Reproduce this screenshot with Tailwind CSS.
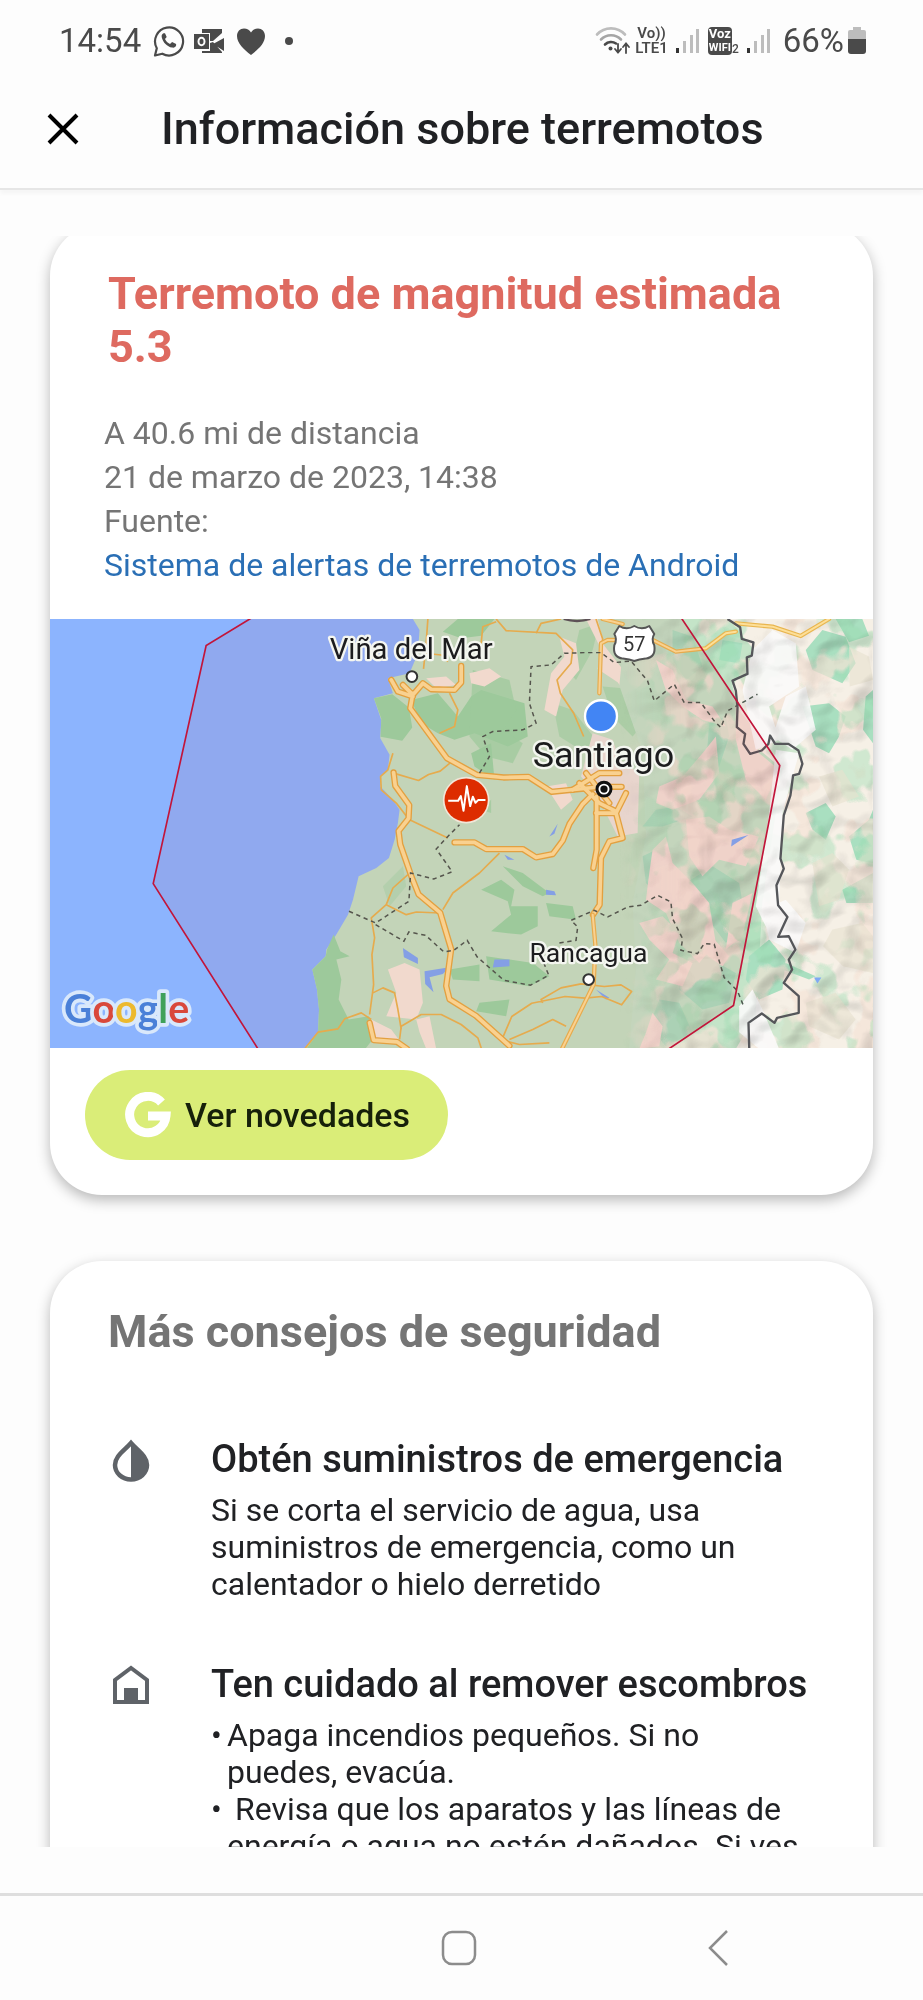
<!DOCTYPE html>
<html lang="es">
<head>
    <meta charset="UTF-8">
    <meta name="viewport" content="width=device-width, initial-scale=1.0">
    <title>Información sobre terremotos</title>
    <script src="https://cdn.jsdelivr.net/npm/@tailwindcss/browser@4"></script>
</head>
<body class="bg-[#fdfdfd] font-['Roboto',sans-serif] text-[#202124]">
    <div class="flex h-screen flex-col">

        <!-- Status bar -->
        <div class="flex h-[82px] shrink-0 items-center justify-between pl-[59px] pr-[57px] text-[#4a4a4a]">
            <div class="flex items-center gap-2">
                <span class="mr-1 text-[33px] leading-10">14:54</span>
                <svg class="size-8" viewBox="0 0 32 32" fill="none" stroke="currentColor" stroke-width="2.2">
                    <path d="M2 30.500l1.800-7.300A14 14 0 1 1 9.300 28.700z" stroke-linejoin="round"/>
                    <path d="M10.500 8.200c-1.600.8-2.200 2.300-1.700 4.200 1.200 5 5.300 9.100 10.300 10.200 1.900.4 3.400-.3 4-2v-1.500l-4-2.200-2.100 2c-2.300-.9-4-2.600-5-4.900l1.700-2-1.700-3.800z" fill="currentColor" stroke="none"/>
                </svg>
                <svg class="h-8 w-8" viewBox="0 0 32 32" fill="currentColor">
                    <path d="M9 4h20v4l-9 8h-3V8H9zM17 18l3-1 9 10v1H9v-2h8zM31 13v13l-11-7z"/>
                    <path d="M1 9h15v15H1z"/>
                    <ellipse cx="8.500" cy="16.500" rx="3" ry="3.800" fill="none" stroke="#fdfdfd" stroke-width="2"/>
                </svg>
                <svg class="ml-1 h-8 w-7" viewBox="0 0 28 32" fill="currentColor">
                    <path d="M14 30C7 24.500 0 18.500 0 11 0 6.500 3 3.500 7 3.500c3 0 5.500 1.500 7 4 1.500-2.500 4-4 7-4 4 0 7 3 7 7.500 0 7.500-7 13.500-14 19z"/>
                </svg>
                <span class="ml-3 size-2 rounded-full bg-current"></span>
            </div>
            <div class="flex items-center">
                <svg class="h-8 w-9" viewBox="0 0 36 32" fill="none" stroke-width="2.600" stroke-linecap="round">
                    <path d="M2 9.500a19 19 0 0 1 28 0" stroke="#bdbdbd"/>
                    <path d="M6 14.500a14 14 0 0 1 20 0" stroke="#a5a5a5"/>
                    <path d="M10 19.500a9 9 0 0 1 11-1" stroke="currentColor"/>
                    <circle cx="15.500" cy="23.500" r="2" fill="currentColor"/>
                    <path d="M23 19v8.500m-3-3.500l3 3.500 3-3.500M31 28v-9.500m-3 3.500l3-3.500 3 3.500" stroke="currentColor" stroke-width="1.800"/>
                </svg>
                <div class="ml-1 flex flex-col items-center text-[15px] leading-[15px] font-semibold">
                    <span>Vo))</span>
                    <span>LTE1</span>
                </div>
                <svg class="ml-2 h-7 w-6" viewBox="0 0 24 28">
                    <path d="M0 21h3v5H0z" fill="#333"/>
                    <path d="M7 14h3v12H7zM14 8h3v18h-3zM20 2h3v24h-3z" fill="#bdbdbd"/>
                </svg>
                <div class="ml-2 flex items-end">
                    <div class="flex flex-col items-center rounded-sm bg-[#4a4a4a] px-px text-[13px] leading-[14px] font-bold text-white">
                        <span>Voz</span>
                        <span class="text-[11px]">WIFI</span>
                    </div>
                    <span class="text-[12px] leading-[12px] font-medium">2</span>
                </div>
                <svg class="ml-2 h-7 w-6" viewBox="0 0 24 28">
                    <path d="M0 21h3v5H0z" fill="#333"/>
                    <path d="M7 14h3v12H7zM14 8h3v18h-3zM20 2h3v24h-3z" fill="#bdbdbd"/>
                </svg>
                <span class="ml-3 text-[33px] leading-10">66%</span>
                <svg class="ml-1 h-7 w-[18px]" viewBox="0 0 18 28">
                    <path d="M5 0h8v3h3q2 0 2 2v8H0V5q0-2 2-2h3z" fill="#bdbdbd"/>
                    <path d="M0 12h18v12q0 3-3 3H3q-3 0-3-3z" fill="#4a4a4a"/>
                </svg>
            </div>
        </div>

        <!-- App bar -->
        <header class="flex h-[108px] shrink-0 items-center gap-[82px] border-b-2 border-[#e6e6e6] pb-3 pl-[47px] shadow-[0_4px_4px_rgba(0,0,0,0.03)]">
            <button type="button" aria-label="Cerrar">
                <svg class="size-8" viewBox="0 0 32 32" fill="none" stroke="#000" stroke-width="4"><path d="M2 2l28 28M30 2L2 30"/></svg>
            </button>
            <h1 class="text-[45px] leading-[52px] font-medium">Información sobre terremotos</h1>
        </header>

        <main class="my-[46px] min-h-0 flex-1 overflow-y-auto px-[50px] [scrollbar-width:none]">

            <!-- Earthquake card -->
            <section class="-mt-3 overflow-hidden rounded-[52px] bg-white shadow-[0_5px_14px_rgba(0,0,0,0.28)]">
                <h2 class="px-[58px] pt-[43px] text-[45px] leading-[53px] font-bold text-[#de6a60]">Terremoto de magnitud estimada 5.3</h2>
                <div class="mt-[38px] px-[54px] pb-8 text-[32px] leading-[44px] text-[#757575]">
                    <p>A 40.6 mi de distancia</p>
                    <p>21 de marzo de 2023, 14:38</p>
                    <p>Fuente:</p>
                    <a href="#" class="block text-[#2a6fb5]">Sistema de alertas de terremotos de Android</a>
                </div>

                <svg class="block h-auto w-full" viewBox="30 27 2472 1290" role="img" aria-label="Mapa del terremoto">
                    <defs>
                        <filter id="relief" x="0" y="0" width="100%" height="100%" color-interpolation-filters="sRGB">
                            <feTurbulence type="fractalNoise" baseFrequency="0.009 0.011" numOctaves="2" seed="8"/>
                            <feDiffuseLighting surfaceScale="40" diffuseConstant="1.150" lighting-color="#fff"><feDistantLight azimuth="220" elevation="60"/></feDiffuseLighting>
                        </filter>
                        <!-- scattered woodland and bare rock -->
                        <filter id="woods" x="0" y="0" width="100%" height="100%" color-interpolation-filters="sRGB">
                            <feTurbulence type="fractalNoise" baseFrequency="0.010 0.009" numOctaves="3" seed="21"/>
                            <feColorMatrix values="0 0 0 0 0.600  0 0 0 0 0.860  0 0 0 0 0.690  14 0 0 0 -7.600"/>
                        </filter>
                        <filter id="rock" x="0" y="0" width="100%" height="100%" color-interpolation-filters="sRGB">
                            <feTurbulence type="fractalNoise" baseFrequency="0.009 0.008" numOctaves="3" seed="5"/>
                            <feColorMatrix values="0 0 0 0 0.960  0 0 0 0 0.890  0 0 0 0 0.840  0 14 0 0 -7.300"/>
                        </filter>
                        <linearGradient id="fade" x1="0" x2="1">
                            <stop offset="0" stop-color="#000"/>
                            <stop offset="0.250" stop-color="#fff"/>
                        </linearGradient>
                        <mask id="east"><rect x="1740" y="27" width="762" height="1291" fill="url(#fade)"/></mask>
                    </defs>
                    <rect x="30" y="27" width="2472" height="1291" fill="#8cb4fe"/>
                    <!-- land -->
                    <path fill="#c3e2c3" d="M1120 27l20 33-5 70-25 60-65 15 15 45-57 15 22 65-3 55 28 50-5 45-23 20v30l38 40 20 30-5 40-10 50-17 55-38 30-53 25-17 70-15 45-35 60-30 45-2 20-40 40 14 60 6 60-3 70-40 48H2502V27z"/>
                    <!-- forests -->
                    <g fill="#9ad7a4">
                        <path d="M1003 265l55-12 50 40 10 60-30 40-65-12 2-55zM1115 270l80-20 60 70 40-60 30-20 130 40 10 100-60 30-100-40-60 20-50-20-50-30zM1210 65l45-38h110l-40 50-60 8zM1295 430l60-30 10 110-60-40z"/>
                        <path d="M862 1020l20-45 20 50 28 15-40 10 15 60-8 60 30 60 60-10 20 60-30 38H800l35-48 3-70-6-60-14-60 40-40z"/>
                        <path d="M1300 180l110 30 20 90-40 60 60 40-30 60-80-20-50-60zM1325 600l30-30v40z" opacity=".7"/>
                        <path d="M1325 840l60-30 40 30-10 50 80 0 0 60-50 25-90-10 60-50-10-40zM1390 770l60 20 80 60-20 10-60-30zM1520 880l80 10 10 40-80-10zM1340 1040l140 20 50 40-60 30-120-20zM1320 1180l90-10-10 50-90-15zM1230 1080l90-15v50l-80-5z"/>
                        <path d="M1620 60l60-20-20 80-50 90-20-20zM1690 230l120 10 20 80-50 60-60-60zM1540 280l60 20 70 90-30 40-80-50z" opacity=".6"/>
                        <path d="M1030 830l60-60 10 60-50 60z" opacity=".4"/>
                    </g>
                    <!-- valleys -->
                    <g fill="#f5e8da">
                        <path d="M1290 190l60-15 35 25-50 30-40-10zM1160 205l60-5 30 25-60 10zM1045 1080l50-20 45 20 10 100-20 50-90-10 30-70zM1130 1230l40-10 10 50 10 48h-30l-20-50zM995 1230l60 30 30 40-80-10z"/>
                        <path d="M1560 80l50 20 10 80-50 60-20 80-35-20 20-110 40-50zM1640 27h35l20 80 70 90 20 90-50-70-60-40 10-60zM1520 530l60-10 20 50-35 30z"/>
                    </g>
                    <path d="M1660 370l60 20 20 60 60 40-5 180-60 10-60-120-50-60z" fill="#ebe3da"/>

                    <!-- Andes -->
                    <path fill="#c4e4c8" d="M1760 27l-20 200 70 200 10 250-40 200 10 200-20 241h732V27z"/>
                    <path fill="#f6f0e6" d="M2070 27l80 100-70 100 40 160 110 90-60 400-20 340-60 101h412V27z"/>
                    <g fill="#a9dfc0">
                        <path d="M2300 120l50-60 70 20 30 80-40 60-90-40zM2390 27h80l20 50-60 20zM2290 290l80-10 50 40-20 60-30 50-40-20zM2300 610l60-30 30 40-30 70-40-30zM2430 680l60-50 12-30v160l-50-10zM2410 840l92-50v90l-80 0zM2130 1040l60-50 50 60-10 90-70 30-40-60zM2240 1060l90 40-20 10-80-30zM2480 260l22-20v160l-30-40z"/>
                        <path d="M2050 90l60 10-10 60-60-10zM1900 60l60 20 30 90-50 40-40-60z"/>
                        <path d="M2010 340l50-20 10 60-30 90-40 0zM1810 740l40-20 20 60-20 70-30-30zM1940 820l80-50 80 50 20 120-60 60-60-80zM1910 1080l90-40 90 50-20 90-80 20-70-60zM1860 1170l60 10 40 90-80 40-50-60zM1960 620l-90 30-60 0 40-50 60-10z"/>
                    </g>
                    <g fill="#f3e0d6">
                        <path d="M2030 380l10 110-60 80-80 30-50-20 10-50 70-30 60-70zM1850 150l50 30 40 90 80 20 40 60-70-20-60-40-50-50zM1940 630l70-10 60 40 90 20-40 90-80-20-50 50-40-60zM1830 790l10-70 40-40 20 80 60 60 50 60 20 120-50 60-60-60-40-90-60-40z"/>
                        <path d="M1800 940l70-20 50 50-20 60 60 30-30 70-80-20 40-60-60-60zM1820 1270l20-60 30 40-10 60-60 8zM2090 290l50 60 20 80 60 50-40 90-60-60-30-120zM2080 880l60-30-30 130-50 40zM2000 960l70 80-20 30-70-50z"/>
                    </g>
                    <g mask="url(#east)">
                        <rect x="1740" y="27" width="762" height="1291" filter="url(#rock)" opacity=".7"/>
                        <rect x="1740" y="27" width="762" height="1291" filter="url(#woods)" opacity=".4"/>
                    </g>
                    <g fill="#fbfafa">
                        <path d="M2140 120l60-60 70 40 10 130-90 60 30 100-70 30-40-180zM2210 420l70 10-50 180-10 280-30 80-40-80 40-280zM2240 260l60-30 30 130-70 60-60-40zM2170 900l70-30 60 70-30 90-80-40z" opacity=".9"/>
                        <path d="M2100 1190l40-50 30 60 50 118h-60l-60-50z" opacity=".9"/>
                    </g>
                    <g fill="#e7e1cf" opacity=".6">
                        <path d="M2320 760l60-30 50 50-30 90-60 20zM2380 960l90-20 32 40v110l-90-20-60-60zM2300 1180l90-30 60 80-50 60-90-40zM2430 110l60 30 12 70-70 20zM2340 500l70-20 50 80-80 30z"/>
                    </g>
                    <g mask="url(#east)" opacity=".22" class="mix-blend-multiply">
                        <rect x="1740" y="27" width="762" height="1291" filter="url(#relief)"/>
                    </g>

                    <!-- lakes -->
                    <path fill="#7fa9f4" d="M1090 1015l45 30v18l-42-20zM1155 1085l75-12-20 20-40 10 12 45-25-25zM1365 1050h45v20l-50 4zM1530 680l25-38-10 30zM1395 735l30 15-20 0zM1520 840l25 5 5 12-30-2zM2078 690l50-14-52 34zM2325 1104h22l-12 18zM1670 1140l40 25-10 5z"/>

                    <!-- minor roads -->
                    <g fill="none" stroke="#e9b650" stroke-width="5" stroke-linejoin="round">
                        <path d="M1060 430l-15 50-22 20 2 40 45 40 35 45M1062 490l75 22 30-18 35-10 30-25M1110 630l115 55M1105 795l-45 40-20 50-45 40 10 60-8 50 5 90-12 90M1040 885l60 30 30-8 70 3M1210 900l30-50 60-45 20-15 60-60M1165 27l-5 70-8 80M1155 130l50 5 20 20M1230 250l25 50-10 50-45 20M1080 1290l5-40 60-35 60 0 60 30 50 40 20 60M795 1318l40-50 60-10 20-30 50-18 30 20M1000 1150l30-15 35 15 10 50 10 60"/>
                        <path d="M1325 100l5-50 40-15M1370 27l30 35 150 8 50 50-5 40-42 50 10 40 40 60 30 70M1490 70l15-30 60-13M1670 27l20 60-5 40"/>
                        <path d="M1510 1180l-5-10 60-35 60-12 70 8 50-5 32 20-30 40-60-25-50 5-60-5-100 20-60 40-30 70M1410 1290l70-30 60-30 40 20M1290 1210l90 80 60 15 90-5"/>
                    </g>
                    <!-- highways: casing first, fill over it -->
                    <g fill="none" stroke-linejoin="round" stroke-linecap="round">
                        <g stroke="#e6ab42" stroke-width="19">
                            <path d="M1120 250l-8 45 110 150 90 50 80 8 75-2 70 45 150-15 60 0M1055 210l20 35 45 15M1090 225l30 30 30-35 25 18 70 2 20-22v-50"/>
                            <path d="M1062 488l5 40 42 58-2 40-30 38 5 40 35 100 20 50 65 55 33 110-15 110 10 40 80 50 100 90"/>
                            <path d="M1245 698l60 0 35 20 110 0 40 25 50-10 30-40 20-50 40-60 30-30"/>
                            <path d="M1672 560l0 160-10 55M1760 550l-30 60 20 75-40 10-25 50-4 140-20 30"/>
                            <path d="M1620 520l60 60 50 25M1640 490l70 90M1600 540l80-50 60 0M1670 610h60M990 1240l12 52 70 5 30 21"/>
                        </g>
                        <g stroke="#fddf98" stroke-width="11">
                            <path d="M1120 250l-8 45 110 150 90 50 80 8 75-2 70 45 150-15 60 0M1055 210l20 35 45 15M1090 225l30 30 30-35 25 18 70 2 20-22v-50"/>
                            <path d="M1062 488l5 40 42 58-2 40-30 38 5 40 35 100 20 50 65 55 33 110-15 110 10 40 80 50 100 90"/>
                            <path d="M1245 698l60 0 35 20 110 0 40 25 50-10 30-40 20-50 40-60 30-30"/>
                            <path d="M1672 560l0 160-10 55M1760 550l-30 60 20 75-40 10-25 50-4 140-20 30"/>
                            <path d="M1620 520l60 60 50 25M1640 490l70 90M1600 540l80-50 60 0M1670 610h60M990 1240l12 52 70 5 30 21"/>
                        </g>
                        <path d="M1680 250l5-150 20-10h60M1660 915l8 90-5 120-95 193M1840 90l70 35 90-10 60-45 30-5M2090 40l110 10 85 28 85-51M1690 27l60 15" stroke="#e9b650" stroke-width="13"/>
                        <path d="M1680 250l5-150 20-10h60M1660 915l8 90-5 120-95 193M1840 90l70 35 90-10 60-45 30-5M2090 40l110 10 85 28 85-51M1690 27l60 15" stroke="#fddf98" stroke-width="6"/>
                    </g>

                    <!-- regional limits -->
                    <g fill="none" stroke="#4d5a50" stroke-width="4.500" stroke-dasharray="13 11">
                        <path d="M928 905l80 35 100-65 5-85 70 18 55-22-48-68 35-38 35-35M1008 945l85 50 15-28 50 10 55 50 30-5 40-30 30 50 40 35 40 35 80 15 55-30-20-50M1320 490l30-50-20-60 30-15 90-5 40-20-20-60 5-110 60-5 40-35 60-2 50 0 40 30 50-5 50 60 20 60 60-50 30 55 50 0 40 55 20 20 20-50 90-50"/>
                        <path d="M1560 1000l50-8 5-40-20-20 70-30 40 20 60-30 40-5 50-30 40 20 5 50 30 60-5 35 50 10 20-30 30 2 30 100 40 40 20 50"/>
                    </g>
                    <!-- border -->
                    <path fill="none" stroke="#55565a" stroke-width="7" stroke-linejoin="round" d="M1573 27q40 12 80 0M2065 27l38 25 5 35 35 10-5 40-15 5 2 50-45 20 10 30 5 50-2 60 25 20-5 30 20 30 35-10 20-20 5-25 15 25 40 0 30 20 12 40-10 30-18 5-8 60-20 60-10 130 10 30-22 50 5 60 28 35-28 60 32-2 20 40-20 30 10 30-25 40 45 40v50l-65 15-8 15-38-28-40 28 3 100-20 10"/>

                    <!-- alert area -->
                    <path fill="#c01830" fill-opacity=".07" stroke="#c2153a" stroke-width="5" d="M630 27L499 107 340 822l317 500h1226l200-134 139-721L1925 22H638z"/>

                    <!-- places -->
                    <g fill="#1c1c1e" stroke="#f4f6f0" stroke-width="14" stroke-linejoin="round" paint-order="stroke" font-family="Roboto">
                        <text x="870" y="148" font-size="88">Viña del Mar</text>
                        <text x="1480" y="472" font-size="108">Santiago</text>
                        <text x="1470" y="1058" font-size="80">Rancagua</text>
                    </g>
                    <g fill="#fff" stroke="#333" stroke-width="6">
                        <circle cx="1117" cy="200" r="16"/>
                        <circle cx="1648" cy="1110" r="16"/>
                    </g>
                    <circle cx="1694" cy="538" r="21" fill="#fff" stroke="#111" stroke-width="9"/>
                    <circle cx="1694" cy="538" r="11" fill="#111"/>
                    <path fill="#fff" stroke="#555" stroke-width="6" stroke-linejoin="round" d="M1740 48q22 14 45 0 23 14 45 0l15 24q-10 16 0 34 6 36-26 40-20 2-34 7-14-5-34-7-32-4-26-40 10-18 0-34z"/>
                    <text x="1785" y="122" text-anchor="middle" font-family="Roboto" font-size="60" fill="#333">57</text>
                    <circle cx="1685" cy="319" r="48" fill="#4285f4" stroke="#fff" stroke-width="7"/>
                    <circle cx="1280" cy="571" r="70" fill="#f1e6d8"/>
                    <circle cx="1280" cy="571" r="65" fill="#dd2c00"/>
                    <path d="M1226 573h30l8-14 8 44 10-74 10 60 8-28 8 18 8-8h22" fill="none" stroke="#fff" stroke-width="6" stroke-linejoin="round"/>

                    <text x="72" y="1240" font-family="Lato" font-size="118" font-weight="bold" stroke="#d9e8fb" stroke-width="22" stroke-linejoin="round" paint-order="stroke"><tspan fill="#4a80d8">G</tspan><tspan fill="#d9483b">o</tspan><tspan fill="#ecb92e">o</tspan><tspan fill="#4a80d8">g</tspan><tspan fill="#3fa15a">l</tspan><tspan fill="#d9483b">e</tspan></text>
                </svg>

                <div class="px-[35px] pt-[22px] pb-[35px]">
                    <button type="button" class="flex h-[90px] items-center gap-[14px] rounded-full bg-[#daed78] pr-[38px] pl-10 text-[34px] font-medium text-[#16200a]">
                        <svg class="size-[46px]" viewBox="0 0 46 46" fill="none" stroke="#fff" stroke-width="9">
                            <path d="M36.500 10.500A18.200 18.200 0 1 0 41 24H23"/>
                        </svg>
                        Ver novedades
                    </button>
                </div>
            </section>

            <!-- Safety tips card -->
            <section class="mt-[66px] rounded-[52px] bg-white px-[58px] pt-11 pb-16 shadow-[0_5px_14px_rgba(0,0,0,0.28)]">
                <h2 class="text-[45px] leading-[53px] font-bold text-[#757575]">Más consejos de seguridad</h2>

                <div class="mt-[78px] flex gap-[61px] pl-1">
                    <svg class="h-12 w-[38px] shrink-0" viewBox="0 0 38 48">
                        <path d="M19 7C12 15 3 20 3 29a16 14.500 0 0 0 32 0C35 20 26 15 19 7z" fill="none" stroke="#5f6368" stroke-width="4.500"/>
                        <path d="M19 6c7 9 16 15 16 24a16 15 0 0 1-16 14z" fill="#5f6368"/>
                    </svg>
                    <div>
                        <h3 class="text-[38px] leading-[46px] font-medium">Obtén suministros de emergencia</h3>
                        <p class="mt-[10px] text-[32px] leading-[37px]">Si se corta el servicio de agua, usa<br>suministros de emergencia, como un calentador o hielo derretido</p>
                    </div>
                </div>

                <div class="mt-[58px] flex gap-[61px] pl-1">
                    <svg class="h-12 w-[38px] shrink-0" viewBox="0 0 38 48">
                        <path d="M3 41V19L19 7l16 12v22z" fill="none" stroke="#5f6368" stroke-width="4"/>
                        <path d="M12 27h14v15H12z" fill="#5f6368"/>
                    </svg>
                    <div>
                        <h3 class="text-[38px] leading-[46px] font-medium">Ten cuidado al remover escombros</h3>
                        <ul class="mt-[10px] text-[32px] leading-[37px]">
                            <li class="flex"><span class="w-4 shrink-0">•</span><span>Apaga incendios pequeños. Si no<br>puedes, evacúa.</span></li>
                            <li class="flex"><span class="w-4 shrink-0">•</span><span>&nbsp;Revisa que los aparatos y las líneas de<br>energía o agua no estén dañados. Si ves<br>daños, corta el suministro.</span></li>
                        </ul>
                    </div>
                </div>
            </section>
        </main>

        <!-- Navigation bar -->
        <nav class="grid h-[107px] shrink-0 grid-cols-3 items-center justify-items-center border-t-3 border-[#dedede] pr-[76px] pl-[70px]">
            <button type="button" aria-label="Inicio" class="col-start-2">
                <svg class="size-9" viewBox="0 0 36 36" fill="none" stroke="#8c8c8c" stroke-width="2.500"><rect x="2" y="2" width="32" height="32" rx="9"/></svg>
            </button>
            <button type="button" aria-label="Atrás">
                <svg class="h-9 w-5" viewBox="0 0 20 36" fill="none" stroke="#8c8c8c" stroke-width="2.500"><path d="M19 1L2 18l17 17"/></svg>
            </button>
        </nav>
    </div>
</body>
</html>
